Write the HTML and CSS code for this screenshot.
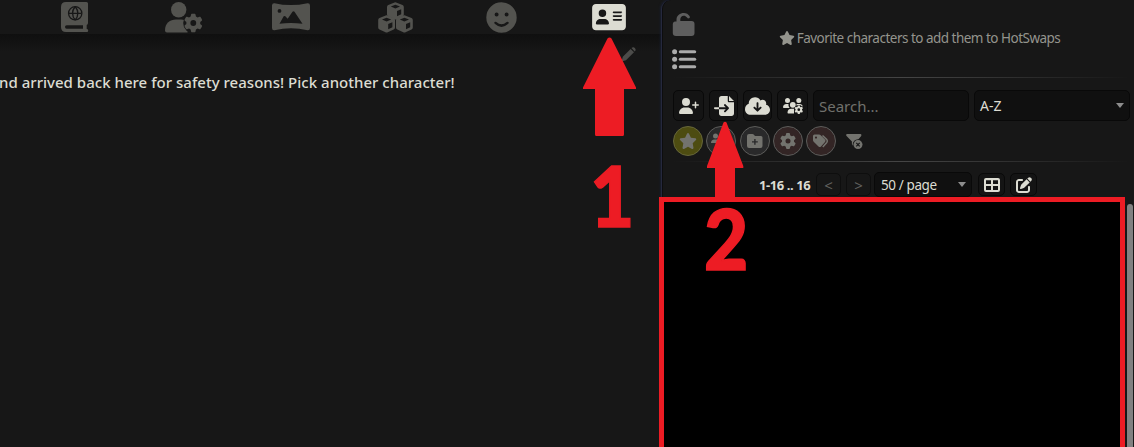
FILE: index.html
```html
<!DOCTYPE html>
<html lang="en">
<head>
<meta charset="utf-8">
<title>Characters</title>
<link rel="stylesheet" href="styles.css">
</head>
<body>
<svg class="defs" width="0" height="0">
  <defs>
    <path id="gear" d="M495.9 166.6c3.2 8.7 .5 18.4-6.4 24.6l-43.3 39.4c1.1 8.3 1.7 16.8 1.7 25.4s-.6 17.1-1.7 25.4l43.3 39.4c6.9 6.2 9.6 15.9 6.4 24.6c-4.4 11.9-9.7 23.3-15.8 34.3l-4.7 8.1c-6.6 11-14 21.4-22.1 31.2c-5.9 7.2-15.7 9.6-24.5 6.8l-55.7-17.7c-13.4 10.3-28.2 18.9-44 25.4l-12.5 57.1c-2 9.1-9 16.3-18.2 17.8c-13.8 2.3-28 3.5-42.5 3.5s-28.7-1.2-42.5-3.5c-9.2-1.5-16.2-8.7-18.2-17.8l-12.5-57.1c-15.8-6.5-30.6-15.1-44-25.4L83.1 425.9c-8.8 2.8-18.6 .3-24.5-6.8c-8.1-9.8-15.5-20.2-22.1-31.2l-4.7-8.1c-6.1-11-11.4-22.4-15.8-34.3c-3.2-8.7-.5-18.4 6.4-24.6l43.3-39.4C64.6 273.1 64 264.6 64 256s.6-17.1 1.7-25.4L22.4 191.2c-6.9-6.2-9.6-15.9-6.4-24.6c4.4-11.9 9.7-23.3 15.8-34.3l4.7-8.1c6.6-11 14-21.4 22.1-31.2c5.9-7.2 15.7-9.6 24.5-6.8l55.7 17.7c13.4-10.3 28.2-18.9 44-25.4l12.5-57.1c2-9.1 9-16.3 18.2-17.8C227.3 1.2 241.5 0 256 0s28.7 1.2 42.5 3.5c9.2 1.5 16.2 8.7 18.2 17.8l12.5 57.1c15.8 6.5 30.6 15.1 44 25.4l55.7-17.7c8.8-2.8 18.6-.3 24.5 6.8c8.1 9.8 15.5 20.2 22.1 31.2l4.7 8.1c6.1 11 11.4 22.4 15.8 34.3zM256 336a80 80 0 1 0 0-160 80 80 0 1 0 0 160z"/>
    <path id="star" d="M316.9 18C311.6 7 300.4 0 288.1 0s-23.4 7-28.8 18L195 150.3 51.4 171.5c-12 1.8-22 10.2-25.7 21.7s-.7 24.2 7.9 32.7L137.8 329 113.2 474.7c-2 12 3 24.2 12.9 31.3s23 8 33.8 2.3l128.3-68.5 128.3 68.5c10.8 5.7 23.9 4.9 33.8-2.3s14.9-19.3 12.9-31.3L438.5 329 542.7 225.9c8.6-8.5 11.7-21.2 7.9-32.7s-13.7-19.9-25.7-21.7L381.2 150.3 316.9 18z"/>
    <g id="cube"><path d="M8.500 .3 15.500 3Q16.800 3.500 16.800 5v7.500Q16.800 14 15.500 14.600L9.500 17.300Q8.400 17.800 7.300 17.300L1.300 14.600Q0 14 0 12.500V5Q0 3.500 1.300 3L7.500 .4Q8 .2 8.500 .3ZM8.400 2.800 3.800 4.600 8.400 6.500 13 4.600ZM10 9v5.200L14.200 12.300V7.200Z" fill-rule="evenodd"/></g>
  </defs>
</svg>
<div class="app">
  <main class="chat">
    <nav class="topbar">
      <svg class="book" width="28" height="30" viewBox="0 0 28 30"><path fill-rule="evenodd" d="M5 0H25.500Q27 0 27 1.500V21Q27 22.300 25.700 23V27H26Q27.200 27 27.200 28.500T26 30H5Q0 30 0 25V5Q0 0 5 0ZM5.700 23.200Q4 23.200 4 25T5.700 26.800H22V23.200ZM14.200 4A7.300 7.300 0 1 0 14.200 18.600A7.300 7.300 0 1 0 14.200 4Z"/><circle cx="14.200" cy="11.300" r="6"/><path class="cut" fill="none" stroke-width="1.300" d="M8 11.300H20.500M14.200 4.500Q8.800 11.300 14.200 18M14.200 4.500Q19.600 11.300 14.200 18"/></svg>
      <svg class="persona" width="38" height="31" viewBox="0 0 38 31"><circle cx="13.700" cy="7.800" r="7.700"/><path d="M0 28.500C0 21 5 17.500 11 17.500H16C19 17.500 21 18.500 22.500 20V30.500H2Q0 30.500 0 28.500Z"/><circle class="cutfill" cx="28.500" cy="21" r="10.300"/><use href="#gear" transform="translate(19 11.700) scale(.0363)"/></svg>
      <svg class="scene" width="38" height="28" viewBox="0 0 38 28"><path fill-rule="evenodd" d="M2.500 .2Q18.500 4 35.500 .2Q38 0 38 2.500V25Q38 27.500 35.500 27.200Q19 23.500 2.500 27.200Q0 27.500 0 25V2.500Q0 0 2.500 .2ZM7.500 6A1.900 1.900 0 1 0 7.500 9.800A1.900 1.900 0 1 0 7.500 6ZM7.500 20.800Q18.500 19.300 30.500 20.800L22.500 8.800Q21.500 7.500 20.500 8.800L15.700 15.800 13.300 13.300Q12.500 12.500 11.700 13.300Z"/></svg>
      <svg class="cubes" width="35" height="31" viewBox="0 0 35 31"><use href="#cube" x="9" y="0"/><use href="#cube" x=".2" y="13"/><use href="#cube" x="18" y="13"/></svg>
      <svg class="smile" width="31" height="31" viewBox="0 0 31 31"><path fill-rule="evenodd" d="M15.500 .3A15.200 15.200 0 1 0 15.500 30.700A15.200 15.200 0 1 0 15.500 .3ZM10.600 10.600a2 2 0 1 1 0 4a2 2 0 1 1 0-4ZM20.600 10.600a2 2 0 1 1 0 4a2 2 0 1 1 0-4ZM8.600 20Q9.500 19.300 10.300 20Q15.500 24.600 20.700 20Q21.700 19.300 22.600 20.200Q23 21 22.300 21.800Q15.500 28 8.700 21.800Q8 20.700 8.600 20Z"/></svg>
      <svg class="card" width="34" height="30" viewBox="0 0 576 512"><path d="M64 32C28.700 32 0 60.700 0 96V416c0 35.300 28.700 64 64 64H512c35.300 0 64-28.700 64-64V96c0-35.300-28.700-64-64-64H64zm80 256h64c44.200 0 80 35.800 80 80c0 8.800-7.200 16-16 16H80c-8.800 0-16-7.200-16-16c0-44.200 35.800-80 80-80zm-32-96a64 64 0 1 1 128 0 64 64 0 1 1 -128 0zm256-32H496c8.800 0 16 7.200 16 16s-7.200 16-16 16H368c-8.800 0-16-7.200-16-16s7.200-16 16-16zm0 64H496c8.800 0 16 7.200 16 16s-7.200 16-16 16H368c-8.800 0-16-7.200-16-16s7.200-16 16-16zm0 64H496c8.800 0 16 7.200 16 16s-7.200 16-16 16H368c-8.800 0-16-7.200-16-16s7.200-16 16-16z"/></svg>
    </nav>
    <section class="messages">
      <div class="tools">
        <svg width="15" height="15" viewBox="0 0 15 15"><path d="M10.500 1 11.300 .6Q12.500-.3 13.800 .9T14.500 3.500L13.700 4.500ZM9.600 1.900 13 5.300 5 13.200 .5 14.500 1.800 9.800Z"/></svg>
      </div>
      <p class="message">nd arrived back here for safety reasons! Pick another character!</p>
    </section>
  </main>

  <aside class="panel">
    <header class="head">
      <div class="modes">
        <svg class="lock" width="24" height="25" viewBox="0 0 24 25"><path d="M4.500 11V7.500C4.500 .5 14.800-1.500 17.700 4.300Q18.400 6.500 16 6.500Q14.800 5 13.500 4.200C11 2.900 8.300 4.500 8.300 7.500V9H19.500Q22.500 9 22.500 12V21Q22.500 24 19.500 24H4Q.8 24 .8 21V12Q.8 9.500 4.500 9.200Z"/></svg>
        <svg class="list" width="25" height="21" viewBox="0 0 25 21"><g><circle cx="2.600" cy="2.700" r="2.500"/><circle cx="2.600" cy="10.200" r="2.500"/><circle cx="2.600" cy="17.700" r="2.500"/><rect x="6.800" y="1.200" width="17.400" height="3" rx="1.500"/><rect x="6.800" y="8.700" width="17.400" height="3" rx="1.500"/><rect x="6.800" y="16.200" width="17.400" height="3" rx="1.500"/></g></svg>
      </div>
      <div class="hint"><svg width="16" height="14" viewBox="0 0 576 512"><use href="#star"/></svg><span>Favorite characters to add them to HotSwaps</span></div>
    </header>
    <div class="rule"></div>
    <div class="actions">
      <button class="btn"><svg width="20" height="16" viewBox="0 0 640 512"><path d="M96 128a128 128 0 1 1 256 0A128 128 0 1 1 96 128zM0 482.300C0 383.800 79.800 304 178.300 304h91.400C368.200 304 448 383.800 448 482.300c0 16.400-13.300 29.700-29.700 29.700H29.700C13.300 512 0 498.700 0 482.300zM504 312V248H440c-13.300 0-24-10.700-24-24s10.700-24 24-24h64V136c0-13.300 10.700-24 24-24s24 10.700 24 24v64h64c13.300 0 24 10.700 24 24s-10.700 24-24 24H552v64c0 13.300-10.700 24-24 24s-24-10.700-24-24z"/></svg></button>
      <button class="btn narrow"><svg width="20" height="20" viewBox="0 0 512 512"><path d="M128 64c0-35.300 28.700-64 64-64H352V128c0 17.700 14.300 32 32 32H512V448c0 35.300-28.700 64-64 64H192c-35.300 0-64-28.700-64-64V336H302.100l-39 39c-9.400 9.400-9.400 24.600 0 33.900s24.600 9.400 33.900 0l80-80c9.400-9.400 9.400-24.600 0-33.900l-80-80c-9.400-9.400-24.600-9.400-33.900 0s-9.400 24.600 0 33.900l39 39H128V64zm0 224v48H24c-13.300 0-24-10.700-24-24s10.700-24 24-24H128zM512 128H384V0L512 128z"/></svg></button>
      <button class="btn narrow"><svg width="25" height="20" viewBox="0 0 640 512"><path d="M144 480C64.500 480 0 415.500 0 336c0-62.800 40.200-116.200 96.200-135.900c-.1-2.700-.2-5.400-.2-8.100c0-88.400 71.600-160 160-160c59.300 0 111 32.200 138.700 80.200C409.900 102 428.300 96 448 96c53 0 96 43 96 96c0 12.200-2.300 23.800-6.400 34.600C596 238.400 640 290.100 640 352c0 70.700-57.300 128-128 128H144zm79-167l80 80c9.400 9.400 24.600 9.400 33.900 0l80-80c9.400-9.400 9.400-24.600 0-33.900s-24.600-9.400-33.900 0l-39 39V184c0-13.300-10.700-24-24-24s-24 10.700-24 24V318.100l-39-39c-9.400-9.400-24.600-9.400-33.900 0s-9.400 24.600 0 33.900z"/></svg></button>
      <button class="btn"><svg width="20" height="16" viewBox="0 0 20 16"><circle cx="4.500" cy="2.600" r="2.500"/><circle cx="15.800" cy="2.600" r="2.500"/><path d="M0 9.500Q0 6 3.500 6H5.500Q5 8 6.600 10H.7ZM13.500 6H16.700Q19.500 6 19.700 8.500H13Q14 7.500 13.500 6Z"/><circle cx="9.800" cy="6.800" r="2.900"/><path d="M4.500 14.800Q4.500 10.800 8.300 10.800H11V15.500H5.200Q4.500 15.500 4.500 14.800Z"/><circle class="cutfill" cx="15.800" cy="11.700" r="4.700"/><use href="#gear" transform="translate(11.500 7.400) scale(.0168)"/></svg></button>
      <div class="field search">Search...</div>
      <div class="field sort">A-Z<i class="caret"></i></div>
    </div>
    <div class="filters">
      <span class="chip fav"><svg width="18" height="16" viewBox="0 0 576 512"><use href="#star"/></svg></span>
      <span class="chip"><svg width="20" height="16" viewBox="0 0 20 16"><circle cx="4.500" cy="3" r="2.500"/><circle cx="15.500" cy="3" r="2.500"/><circle cx="10" cy="6" r="3"/><path d="M0 10Q0 6.500 3.500 6.500H6V10ZM14 6.500H17Q20 7 20 10H14ZM4 15Q4 10.500 8 10.500H12Q16 10.500 16 15Z"/></svg></span>
      <span class="chip"><svg width="16" height="14" viewBox="0 0 16 14"><path fill-rule="evenodd" d="M2 0H5.500Q6.200 0 6.700 .6L8 2H14Q15.500 2 15.500 3.500V12Q15.500 14 13.500 14H2Q0 14 0 12V2Q0 0 2 0ZM7.200 5V7.200H5V8.600H7.200V10.800H8.600V8.600H10.800V7.200H8.600V5Z"/></svg></span>
      <span class="chip red"><svg width="16" height="16" viewBox="0 0 512 512"><use href="#gear"/></svg></span>
      <span class="chip red"><svg width="17" height="15" viewBox="0 0 17 15"><path fill-rule="evenodd" d="M0 2Q0 .5 1.500 .5H6Q7 .5 7.700 1.200L12 5.500Q13.200 6.800 12 8L8 12.500Q6.800 13.600 5.500 12.500L.7 7.700Q0 7 0 6ZM3 2.500a1.100 1.100 0 1 0 0 2.200a1.100 1.100 0 1 0 0-2.200Z"/><path d="M9.500 1.500 13.800 5.600Q15 7 13.800 8.500L9.800 13" fill="none" stroke-width="1.500"/></svg></span>
      <svg class="funnel" width="17" height="16" viewBox="0 0 17 16"><path d="M.8 0H14.700Q16 .6 15.200 1.900L10.500 7.500V12.500Q9.800 13.500 8.800 12.800L6.300 11Q5.900 10.700 5.900 10V7.500L.3 1.800Q-.3 .5 .8 0Z"/><circle class="cutfill" cx="12" cy="10.600" r="5.300"/><circle cx="12" cy="10.600" r="4.500"/><path class="cut" stroke-width="1.200" d="m10.300 8.900 3.400 3.400m0-3.400-3.400 3.400"/></svg>
    </div>
    <div class="rule"></div>
    <div class="pager">
      <b class="range">1-16 .. 16</b>
      <button class="btn page">&lt;</button>
      <button class="btn page next">&gt;</button>
      <div class="field size">50 / page<i class="caret"></i></div>
      <button class="btn small"><svg width="16" height="14" viewBox="0 0 16 14"><path fill-rule="evenodd" d="M2 0H14Q16 0 16 2V12Q16 14 14 14H2Q0 14 0 12V2Q0 0 2 0ZM2 2.200V6H7V2.200ZM9 2.200V6H14V2.200ZM2 8V12H7V8ZM9 8V12H14V8Z"/></svg></button>
      <button class="btn small"><svg width="16" height="16" viewBox="0 0 512 512"><path d="M471.600 21.700c-21.900-21.900-57.300-21.900-79.200 0L362.300 51.700l97.900 97.900 30.100-30.100c21.900-21.900 21.900-57.300 0-79.200L471.600 21.700zm-299.200 220c-6.100 6.100-10.800 13.600-13.500 21.900l-29.600 88.800c-2.900 8.600-.6 18.100 5.800 24.600s15.900 8.700 24.600 5.800l88.800-29.600c8.200-2.700 15.700-7.400 21.900-13.500L437.700 172.300 339.700 74.300 172.400 241.700zM96 64C43 64 0 107 0 160V416c0 53 43 96 96 96H352c53 0 96-43 96-96V320c0-17.700-14.300-32-32-32s-32 14.300-32 32v96c0 17.700-14.300 32-32 32H96c-17.700 0-32-14.300-32-32V160c0-17.700 14.300-32 32-32h96c17.700 0 32-14.300 32-32s-14.300-32-32-32H96z"/></svg></button>
    </div>
    <div class="characters"><div class="thumb"></div></div>
  </aside>

  <div class="frame"></div>
  <svg class="arrow first" width="54" height="100" viewBox="0 0 54 100"><path d="M24.500 1.500Q26.500-.5 28.500 1.500L53 50.500V52H41V97.500Q41 99 39.500 99H13.500Q12 99 12 97.500V52H0V50.500Z"/></svg>
  <svg class="arrow second" width="37" height="78" viewBox="0 0 37 78"><path d="M16.500 1.500Q18 0 19.500 1.500L36.300 45V47H28V78H8V47H0V45Z"/></svg>
  <span class="step one">1</span>
  <span class="step two">2</span>
</div>
</body>
</html>
```
FILE: styles.css
```css
* { box-sizing: border-box; }
body {
  margin: 0;
  background: #171717;
  color: #dcdcd2;
  font-family: "Noto Sans", sans-serif;
  font-size: 15px;
  overflow: hidden;
}
svg { display: block; fill: currentColor; flex: none; overflow: visible; }
.defs { position: absolute; }
.app { position: relative; display: flex; width: 1134px; height: 447px; overflow: hidden; }

.chat { width: 661px; flex: none; display: flex; flex-direction: column; }
.topbar {
  height: 34px;
  flex: none;
  display: flex;
  align-items: center;
  padding-left: 61px;
  background: #171717;
  color: #53534f;
}
.persona { margin-left: 76px; }
.scene { margin-left: 69px; }
.cubes { margin-left: 68px; }
.smile { margin-left: 73px; }
.card { margin-left: 75px; color: #dcdcd2; }
.cut { stroke: #171717; }
.cutfill { fill: #171717; }
.messages { flex: 1; background: linear-gradient(#0f0f0f, #171717 18px); }
.tools { display: flex; justify-content: flex-end; padding: 13px 25px 0 0; color: #4c4c4a; }
.message { margin: 10px 0 0 -1px; font-weight: 500; line-height: 20px; letter-spacing: .02px; white-space: nowrap; }

.panel {
  flex: 1;
  min-width: 0;
  display: flex;
  flex-direction: column;
  border-left: 1px solid #25283d;
  border-top-left-radius: 9px;
  box-shadow: inset 1px 0 #0d0d0f, 0 0 3px #1c2546;
  padding: 0 4px 0 11px;
}
.head { height: 77px; flex: none; display: flex; }
.modes { width: 40px; padding-top: 12px; margin-left: -1px; }
.lock { color: #5e5e5e; }
.list { color: #ababab; margin-top: 12px; }
.hint {
  display: flex;
  flex: 1;
  align-items: center;
  justify-content: center;
  gap: 2px;
  height: 76px;
  padding-right: 3px;
  color: #94948d;
  font-size: 13.500px;
  letter-spacing: -.51px;
  white-space: nowrap;
}
.rule { height: 1px; flex: none; background: linear-gradient(90deg, transparent, #454545 50%, transparent); }
.actions { display: flex; height: 31px; gap: 5px; margin-top: 12px; flex: none; }
.btn {
  display: flex;
  align-items: center;
  justify-content: center;
  width: 31px;
  padding: 0;
  color: #dcdcd2;
  background: #141414;
  border: 1px solid #090909;
  border-radius: 5px;
  font: inherit;
  flex: none;
}
.narrow { width: 29px; }
.field {
  display: flex;
  align-items: center;
  background: #101010;
  border: 1px solid #090909;
  border-radius: 5px;
  padding: 0 5px;
  flex: none;
}
.search { width: 156px; color: #70706c; }
.sort { width: 156px; font-size: 14px; }
.caret { margin-left: auto; border: 4px solid transparent; border-top: 5px solid #8d8d8d; border-bottom: 0; }
.filters { display: flex; align-items: center; height: 30px; margin-top: 5px; gap: 3.300px; flex: none; color: #73736e; }
.chip {
  display: flex;
  align-items: center;
  justify-content: center;
  width: 30px;
  height: 30px;
  border: 1px solid #5c5c5a;
  border-radius: 50%;
  background: #29292a;
}
.chip svg { stroke: none; }
.chip path[stroke-width] { stroke: currentColor; }
.fav { background: #4d4c11; border-color: #66663a; }
.red { background: #332525; }
.funnel { margin-left: 7px; margin-top: 2px; }
.filters + .rule { margin-top: 5px; }
.pager { display: flex; align-items: center; height: 25px; margin-top: 10px; padding-left: 86px; flex: none; }
.range { width: 57px; font-size: 13px; letter-spacing: -.4px; white-space: nowrap; }
.page { width: 25px; height: 23px; color: #62625f; font-size: 15px; background: #171717; border-color: #0e0e0e; }
.next { margin-left: 5px; }
.size { width: 98px; height: 25px; margin-left: 3px; padding-left: 6px; font-size: 13.500px; letter-spacing: -.4px; }
.small { width: 27px; height: 23px; margin-left: 5px; }
.size + .small { margin-left: 6px; }
.characters { flex: 1; margin: 0 -4px 0 -11px; padding-top: 7px; display: flex; justify-content: flex-end; }
.thumb { width: 6px; margin-right: 1px; background: #818181; border-radius: 4px 4px 0 0; }

/* Walkthrough annotations laid over the interface */
.frame { position: absolute; left: 659px; top: 197px; width: 466px; height: 260px; background: #000; border: 5px solid #ed1c24; }
.arrow { position: absolute; color: #ed1c24; }
.first { left: 583px; top: 37px; }
.second { left: 707px; top: 121px; }
.step {
  position: absolute;
  color: #ed1c24;
  font: 900 84px/84px Lato, sans-serif;
  -webkit-text-stroke: 1.500px #ed1c24;
  transform: scaleX(.91);
  transform-origin: 0 0;
}
.one { left: 590px; top: 153px; }
.two { left: 704px; top: 196px; }
```
